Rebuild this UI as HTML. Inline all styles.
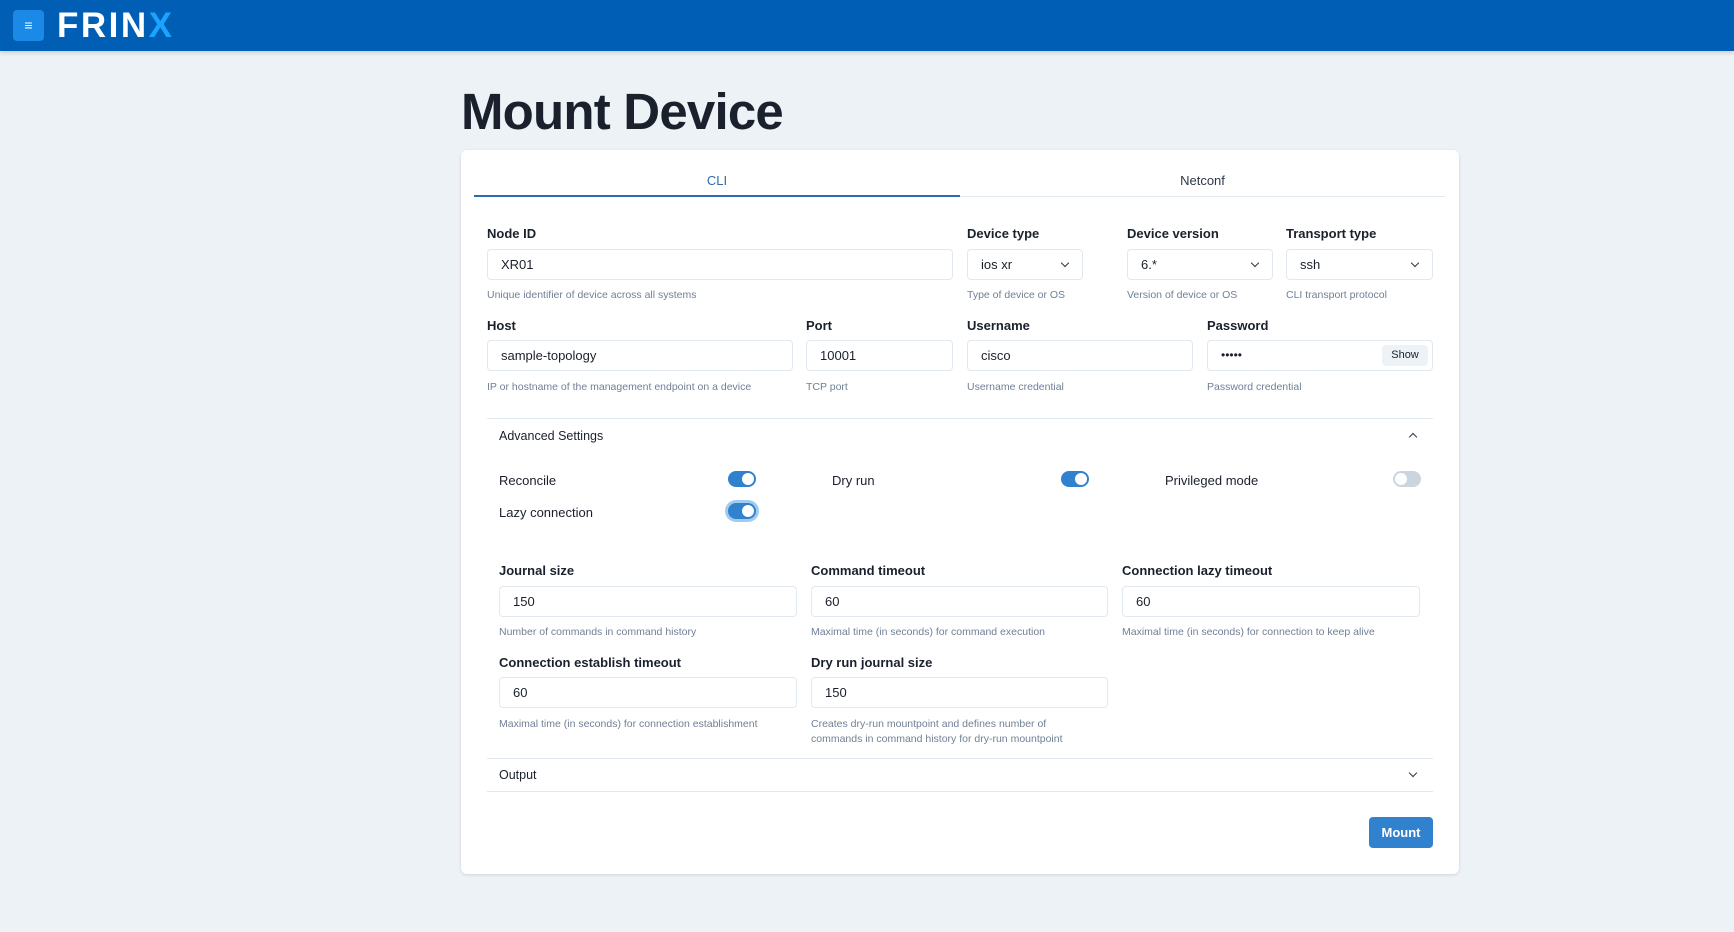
<!DOCTYPE html>
<html><head><meta charset="utf-8"><style>
*{box-sizing:border-box;margin:0;padding:0}
body{width:1734px;height:932px;background:#edf2f7;font-family:"Liberation Sans",sans-serif;color:#1a202c;position:relative;overflow:hidden}
.a{position:absolute}
.hdr{left:0;top:0;width:1734px;height:51px;background:#005eb4;box-shadow:0 2px 4px rgba(0,0,0,.15)}
.ham{left:13px;top:10px;width:31px;height:31px;background:#1a8ae6;border-radius:4px;color:#fff;font-size:14px;text-align:center;line-height:31px}
.logo{left:57px;top:6px;font-size:35px;font-weight:bold;color:#fff;letter-spacing:2.5px}
h1{position:absolute;left:461px;top:82px;font-size:51px;font-weight:bold;color:#1a202c;letter-spacing:-0.8px}
.card{left:461px;top:150px;width:998px;height:724px;background:#fff;border-radius:6px;box-shadow:0 1px 3px rgba(0,0,0,.12)}
.tab{font-size:13px;color:#2d3748}
.lbl{font-size:13px;font-weight:bold;color:#1a202c}
.inp{height:31px;border:1px solid #e2e8f0;border-radius:4px;background:#fff;font-size:13px;padding-left:13px;line-height:29px;color:#1a202c}
.help{font-size:10.5px;color:#718096}
.chev{position:absolute;right:14px;top:10px;width:6px;height:6px;border-right:1.5px solid #2d3748;border-bottom:1.5px solid #2d3748;transform:rotate(45deg)}
.tg{width:28px;height:16px;border-radius:8px;background:#3182ce}
.tg::after{content:"";position:absolute;right:2px;top:2px;width:12px;height:12px;border-radius:50%;background:#fff}
.tg.off{background:#cbd5e0}.tg.off::after{left:2px;right:auto}
.line{height:1px;background:#e2e8f0}
.tl{font-size:13px;color:#1a202c}
</style></head><body>
<div class="a hdr"></div>
<div class="a ham">≡</div>
<div class="a logo">FRIN<span style="color:#1aa3ff">X</span></div>
<h1>Mount Device</h1>
<div class="a card"></div>
<div class="a line" style="left:474px;top:196px;width:971px"></div>
<div class="a" style="left:474px;top:195px;width:486px;height:2px;background:#2b6cb0"></div>
<div class="a tab" style="left:474px;top:173px;width:486px;text-align:center;color:#2b6cb0">CLI</div>
<div class="a tab" style="left:960px;top:173px;width:485px;text-align:center">Netconf</div>

<div class="a lbl" style="left:487px;top:226px">Node ID</div>
<div class="a inp" style="left:487px;top:249px;width:466px">XR01</div>
<div class="a help" style="left:487px;top:289px">Unique identifier of device across all systems</div>
<div class="a lbl" style="left:967px;top:226px">Device type</div>
<div class="a inp" style="left:967px;top:249px;width:116px">ios xr<span class="chev"></span></div>
<div class="a help" style="left:967px;top:289px">Type of device or OS</div>
<div class="a lbl" style="left:1127px;top:226px">Device version</div>
<div class="a inp" style="left:1127px;top:249px;width:146px">6.*<span class="chev"></span></div>
<div class="a help" style="left:1127px;top:289px">Version of device or OS</div>
<div class="a lbl" style="left:1286px;top:226px">Transport type</div>
<div class="a inp" style="left:1286px;top:249px;width:147px">ssh<span class="chev"></span></div>
<div class="a help" style="left:1286px;top:289px">CLI transport protocol</div>

<div class="a lbl" style="left:487px;top:318px">Host</div>
<div class="a inp" style="left:487px;top:340px;width:306px">sample-topology</div>
<div class="a help" style="left:487px;top:381px">IP or hostname of the management endpoint on a device</div>
<div class="a lbl" style="left:806px;top:318px">Port</div>
<div class="a inp" style="left:806px;top:340px;width:147px">10001</div>
<div class="a help" style="left:806px;top:381px">TCP port</div>
<div class="a lbl" style="left:967px;top:318px">Username</div>
<div class="a inp" style="left:967px;top:340px;width:226px">cisco</div>
<div class="a help" style="left:967px;top:381px">Username credential</div>
<div class="a lbl" style="left:1207px;top:318px">Password</div>
<div class="a inp" style="left:1207px;top:340px;width:226px;font-size:12px">•••••</div>
<div class="a" style="left:1382px;top:345px;width:46px;height:21px;background:#edf2f7;border-radius:4px;font-size:11px;text-align:center;line-height:21px;color:#1a202c">Show</div>
<div class="a help" style="left:1207px;top:381px">Password credential</div>

<div class="a line" style="left:487px;top:418px;width:946px"></div>
<div class="a" style="left:499px;top:429px;font-size:12.5px">Advanced Settings</div>
<div class="a" style="left:1410px;top:434px;width:6px;height:6px;border-left:1.5px solid #2d3748;border-top:1.5px solid #2d3748;transform:rotate(45deg)"></div>

<div class="a tl" style="left:499px;top:473px">Reconcile</div>
<div class="a tg" style="left:728px;top:471px"></div>
<div class="a tl" style="left:832px;top:473px">Dry run</div>
<div class="a tg" style="left:1061px;top:471px"></div>
<div class="a tl" style="left:1165px;top:473px">Privileged mode</div>
<div class="a tg off" style="left:1393px;top:471px"></div>
<div class="a tl" style="left:499px;top:505px">Lazy connection</div>
<div class="a tg" style="left:728px;top:503px;box-shadow:0 0 0 3px rgba(66,153,225,.5)"></div>

<div class="a lbl" style="left:499px;top:563px">Journal size</div>
<div class="a inp" style="left:499px;top:586px;width:298px">150</div>
<div class="a help" style="left:499px;top:626px">Number of commands in command history</div>
<div class="a lbl" style="left:811px;top:563px">Command timeout</div>
<div class="a inp" style="left:811px;top:586px;width:297px">60</div>
<div class="a help" style="left:811px;top:626px">Maximal time (in seconds) for command execution</div>
<div class="a lbl" style="left:1122px;top:563px">Connection lazy timeout</div>
<div class="a inp" style="left:1122px;top:586px;width:298px">60</div>
<div class="a help" style="left:1122px;top:626px">Maximal time (in seconds) for connection to keep alive</div>

<div class="a lbl" style="left:499px;top:655px">Connection establish timeout</div>
<div class="a inp" style="left:499px;top:677px;width:298px">60</div>
<div class="a help" style="left:499px;top:718px">Maximal time (in seconds) for connection establishment</div>
<div class="a lbl" style="left:811px;top:655px">Dry run journal size</div>
<div class="a inp" style="left:811px;top:677px;width:297px">150</div>
<div class="a help" style="left:811px;top:717px;line-height:15px">Creates dry-run mountpoint and defines number of<br>commands in command history for dry-run mountpoint</div>

<div class="a line" style="left:487px;top:758px;width:946px"></div>
<div class="a" style="left:499px;top:768px;font-size:12.5px">Output</div>
<div class="a" style="left:1410px;top:770px;width:6px;height:6px;border-right:1.5px solid #2d3748;border-bottom:1.5px solid #2d3748;transform:rotate(45deg)"></div>
<div class="a line" style="left:487px;top:791px;width:946px"></div>

<div class="a" style="left:1369px;top:817px;width:64px;height:31px;background:#3182ce;border-radius:4px;color:#fff;font-size:13px;font-weight:bold;text-align:center;line-height:31px">Mount</div>
</body></html>
